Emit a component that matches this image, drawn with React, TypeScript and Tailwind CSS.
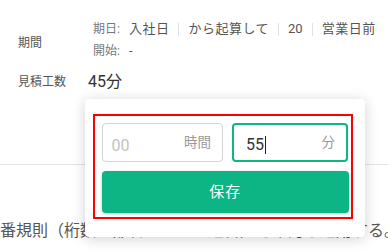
const FONT = "font-['Roboto','Noto_Sans_CJK_JP',sans-serif]";

function Sep() {
  return <span className="mx-[9px] inline-block h-[13px] w-px bg-[#e2e2e2]" />;
}

export default function App() {
  return (
    <div className={`relative h-[252px] w-[388px] overflow-hidden bg-white ${FONT}`}>
      <div className="flex items-center pt-[18px] pl-[18px]">
        <div className="mt-[6px] w-[75px] text-[12px] text-[#555]">期間</div>
        <div className="flex flex-col text-[13px] leading-[22px] text-[#555]">
          <div className="flex items-center">
            <span className="mr-[9px] text-[12px] text-[#777]">期日:</span>
            <span className="tracking-[0.5px]">入社日</span>
            <Sep />
            <span className="tracking-[0.5px]">から起算して</span>
            <Sep />
            <span>20</span>
            <Sep />
            <span className="tracking-[0.5px]">営業日前</span>
          </div>
          <div className="flex items-center">
            <span className="mr-[9px] text-[12px] text-[#777]">開始:</span>
            <span>-</span>
          </div>
        </div>
      </div>

      <div className="mt-[8px] flex items-center pl-[18px]">
        <div className="w-[70px] text-[12px] text-[#555]">見積工数</div>
        <div className="text-[16px] leading-[24px] text-[#333]">45分</div>
      </div>

      <div className="mt-[70px] h-px w-full bg-[#e3e3e3]" />

      <div className="mt-[54px] whitespace-nowrap text-[16px] leading-[24px] text-[#555]">
        番規則（桁数・部署コード・連番）を確認し適用する。
      </div>

      <div className="absolute left-[85px] top-[99px] h-[138px] w-[280px] rounded-[4px] bg-white pl-[8px] pt-[15px] shadow-[0_2px_14px_rgba(0,0,0,0.18)]">
        <div className="h-[105px] w-[260px] border-2 border-[#ff0000] pl-[6.5px] pt-[7px]">
          <div className="flex gap-[9px]">
            <div className="flex h-[39px] w-[121.5px] items-center justify-between rounded-[4px] border border-[#d4d4d4] pl-[9px] pr-[11px]">
              <span className="mt-[6px] text-[16px] text-[#c2c2c2]">00</span>
              <span className="text-[13.5px] text-[#9a9a9a]">時間</span>
            </div>
            <div className="flex h-[39px] w-[116px] items-center justify-between rounded-[4px] border-2 border-[#10b584] pl-[12px] pr-[11px]">
              <span className="mt-[4px] flex items-center text-[16px] text-[#333]">
                55
                <span className="ml-px inline-block h-[18px] w-px bg-[#222]" />
              </span>
              <span className="text-[13.5px] text-[#9a9a9a]">分</span>
            </div>
          </div>
          <button className="mt-[9px] flex h-[42px] w-[247.5px] items-center justify-center rounded-[4px] bg-[#0db585] text-[15px] tracking-[1px] text-white shadow-[0_1px_3px_rgba(0,0,0,0.25)]">
            保存
          </button>
        </div>
      </div>
    </div>
  );
}
